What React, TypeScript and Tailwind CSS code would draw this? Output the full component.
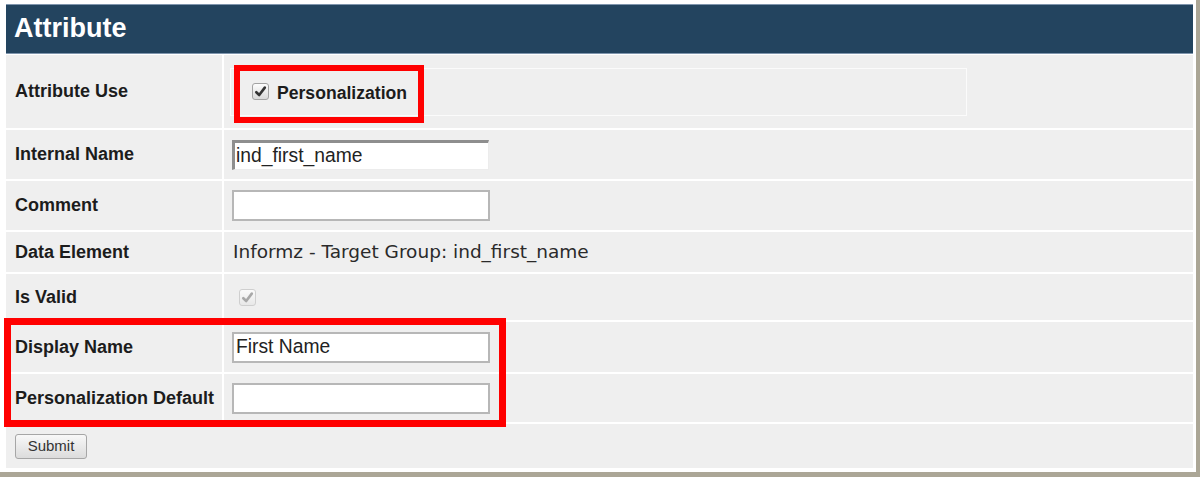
import React from "react";

function Check({ disabled = false }: { disabled?: boolean }) {
  return (
    <span
      className={
        disabled
          ? "inline-flex w-[17px] h-[17px] items-center justify-center rounded-[3px] border border-[#cfcfcf] bg-linear-to-b from-[#fafafa] to-[#e8e8e8]"
          : "inline-flex w-[17px] h-[17px] items-center justify-center rounded-[3px] border border-[#a3a3a3] bg-linear-to-b from-[#fdfdfd] to-[#d9d9d9]"
      }
    >
      <svg width="13" height="13" viewBox="0 0 13 13">
        <path
          d="M2.3 7.2 L5.2 10 L10.8 2.6"
          fill="none"
          stroke={disabled ? "#a8a8a8" : "#333"}
          strokeWidth="2.6"
          strokeLinecap="round"
          strokeLinejoin="round"
        />
      </svg>
    </span>
  );
}

const label =
  "bg-[#efefef] flex items-center pl-[9px] font-['Liberation_Sans',Arial,sans-serif] font-bold text-[18px] text-[#1c1c1c]";
const valueCell = "bg-[#efefef] flex items-center pl-[8px]";
const inputText =
  "font-['Liberation_Sans',Arial,sans-serif] text-[19.3px] text-[#222] outline-none bg-white";

export default function App() {
  return (
    <div className="relative w-[1200px] h-[477px] bg-white border-r-[4px] border-b-[5px] border-[#aba696] pl-[6px] pt-[4px] pr-[3px] pb-[4px] overflow-hidden">
      <div className="h-[50px] bg-[#23445f] border-y border-[#7f95ad] flex items-center pl-[8px] pb-[2px]">
        <span className="font-['Liberation_Sans',Arial,sans-serif] font-bold text-[27px] text-white">
          Attribute
        </span>
      </div>
      <div className="mt-[1px] flex flex-col gap-[2px] bg-white">
        <div className="grid grid-cols-[216px_1fr] gap-x-[2px] h-[73px]">
          <div className={label}>Attribute Use</div>
          <div className="bg-[#efefef] flex items-center pl-[6px]">
            <div className="w-[737px] h-[48px] border border-[#fbfbfb] flex items-center pl-[21px] gap-[8px]">
              <Check />
              <span className="font-['Liberation_Sans',Arial,sans-serif] font-bold text-[17.6px] text-[#1c1c1c] mt-[3px]">
                Personalization
              </span>
            </div>
          </div>
        </div>
        <div className="grid grid-cols-[216px_1fr] gap-x-[2px] h-[49px]">
          <div className={label}>Internal Name</div>
          <div className={valueCell}>
            <input
              readOnly
              value="ind_first_name"
              className={
                inputText +
                " w-[257px] h-[30px] mt-[1px] border-t-[3px] border-l-[3px] border-r border-b border-t-[#8e8e8e] border-l-[#8e8e8e] border-r-[#ececec] border-b-[#ececec] pl-[1px]"
              }
            />
          </div>
        </div>
        <div className="grid grid-cols-[216px_1fr] gap-x-[2px] h-[49px]">
          <div className={label}>Comment</div>
          <div className={valueCell}>
            <input
              readOnly
              value=""
              className={inputText + " w-[258px] h-[31px] border-2 border-[#b7b7b7] pl-[2px]"}
            />
          </div>
        </div>
        <div className="grid grid-cols-[216px_1fr] gap-x-[2px] h-[40px]">
          <div className={label}>Data Element</div>
          <div className={valueCell}>
            <span className="ml-[1px] font-['DejaVu_Sans',Verdana,sans-serif] text-[18.5px] text-[#2a2a2a]">
              Informz - Target Group: ind_first_name
            </span>
          </div>
        </div>
        <div className="grid grid-cols-[216px_1fr] gap-x-[2px] h-[46px]">
          <div className={label}>Is Valid</div>
          <div className={valueCell}>
            <span className="ml-[7px] flex">
              <Check disabled />
            </span>
          </div>
        </div>
        <div className="grid grid-cols-[216px_1fr] gap-x-[2px] h-[50px]">
          <div className={label}>Display Name</div>
          <div className={valueCell}>
            <input
              readOnly
              value="First Name"
              className={inputText + " w-[258px] h-[31px] border-2 border-[#b7b7b7] pl-[2px]"}
            />
          </div>
        </div>
        <div className="grid grid-cols-[216px_1fr] gap-x-[2px] h-[48px]">
          <div className={label}>Personalization Default</div>
          <div className={valueCell}>
            <input
              readOnly
              value=""
              className={inputText + " w-[258px] h-[31px] border-2 border-[#b7b7b7] pl-[2px]"}
            />
          </div>
        </div>
        <div className="h-[44px] bg-[#efefef] flex items-center pl-[9px]">
          <button className="w-[72px] h-[25px] rounded-[3px] border border-[#a6a6a6] bg-linear-to-b from-[#f8f8f8] to-[#dcdcdc] font-['Liberation_Sans',Arial,sans-serif] text-[15px] text-[#333] flex items-center justify-center">
            Submit
          </button>
        </div>
      </div>

      <div className="absolute left-[234px] top-[65px] w-[190px] h-[58px] border-[6px] border-[#ff0000] pointer-events-none" />
      <div className="absolute left-[4px] top-[318px] w-[502px] h-[109px] border-[7px] border-[#ff0000] pointer-events-none" />
    </div>
  );
}
